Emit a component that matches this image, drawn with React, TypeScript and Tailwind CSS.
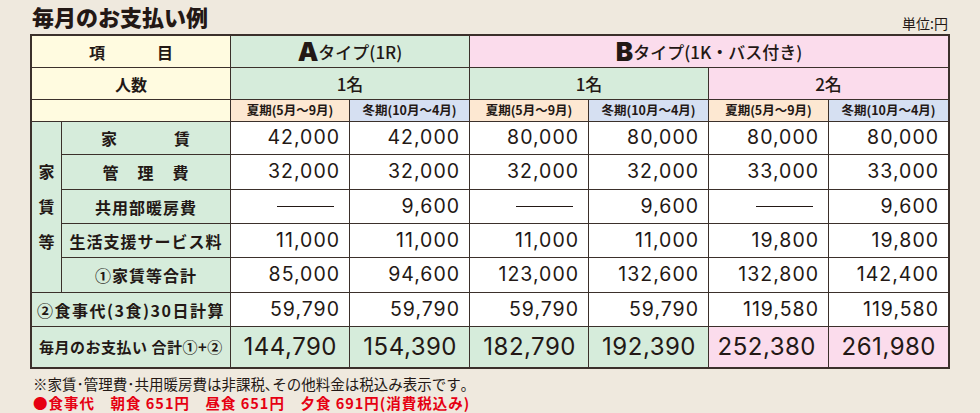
const jp = "font-[family-name:'Noto_Sans_CJK_JP',sans-serif]";
const num = "font-[family-name:Inter,'Noto_Sans_CJK_JP',sans-serif]";

const rows = [
  { label: ["家", "賃"], gap: "gap-[56px]", values: ["42,000", "42,000", "80,000", "80,000", "80,000", "80,000"] },
  { label: ["管", "理", "費"], gap: "gap-[18px]", values: ["32,000", "32,000", "32,000", "32,000", "33,000", "33,000"] },
  { label: ["共用部暖房費"], gap: "", values: ["-", "9,600", "-", "9,600", "-", "9,600"] },
  { label: ["生活支援サービス料"], gap: "", values: ["11,000", "11,000", "11,000", "11,000", "19,800", "19,800"] },
  { label: ["①家賃等合計"], gap: "", values: ["85,000", "94,600", "123,000", "132,600", "132,800", "142,400"] },
];

const meal = ["59,790", "59,790", "59,790", "59,790", "119,580", "119,580"];
const totals = ["144,790", "154,390", "182,790", "192,390", "252,380", "261,980"];

function Value({ v }: { v: string }) {
  return (
    <div className={`bg-white flex items-center justify-end pr-[9px] text-[19.5px] tracking-[1px] ${num}`}>
      {v === "-" ? <span className="block w-[57px] h-px bg-[#231815] mr-[6px]" /> : v}
    </div>
  );
}

function Season() {
  return (
    <>
      <div className="bg-[#fde8d2] flex items-center justify-center text-[12.5px] font-bold">夏期(5月〜9月)</div>
      <div className="bg-[#d6e0f2] flex items-center justify-center text-[12.5px] font-bold">冬期(10月〜4月)</div>
    </>
  );
}

export default function App() {
  return (
    <div className={`w-[980px] h-[413px] bg-[#efe9de] text-[#231815] pl-[30px] ${jp}`}>
      <div className="w-[920px] flex items-end justify-between pt-[4px] h-[34px]">
        <h1 className="text-[22px] font-black leading-none pl-[2px] pb-[7px]">毎月のお支払い例</h1>
        <span className="text-[14px] leading-none pb-[4px] pr-[2px]">単位:円</span>
      </div>

      <div className="w-[920px] border-2 border-[#3b302b] bg-[#3b302b] grid gap-px grid-cols-[29px_168px_118px_119px_118px_119px_119px_119px] grid-rows-[31px_31px_21px_32px_34px_33px_33px_34px_33px_40px]">
        {/* header */}
        <div className="col-span-2 bg-[#fffbe0] flex items-center justify-center gap-[52px] text-[16px] font-bold">
          <span>項</span>
          <span>目</span>
        </div>
        <div className="col-span-2 bg-[#d6ecdb] flex items-center justify-center text-[17px] font-medium">
          <span className={`text-[26px] font-black leading-none ${num}`}>A</span>
          <span>タイプ(1R)</span>
        </div>
        <div className="col-span-4 bg-[#fbdcec] flex items-center justify-center text-[17px] font-medium">
          <span className={`text-[26px] font-black leading-none ${num}`}>B</span>
          <span>タイプ(1K・バス付き)</span>
        </div>

        <div className="col-span-2 bg-[#fffbe0] flex items-center justify-center text-[16px] font-bold">人数</div>
        <div className="col-span-2 bg-[#d6ecdb] flex items-center justify-center text-[17px] font-medium">1名</div>
        <div className="col-span-2 bg-[#d6ecdb] flex items-center justify-center text-[17px] font-medium">1名</div>
        <div className="col-span-2 bg-[#fbdcec] flex items-center justify-center text-[17px] font-medium">2名</div>

        <div className="col-span-2 bg-[#fffbe0]" />
        <Season />
        <Season />
        <Season />

        {/* 家賃等 */}
        {rows.map((r, i) => (
          <>
            {i === 0 && (
              <div className="row-span-5 bg-[#d6ecdb] flex flex-col items-center justify-center text-[16px] font-bold leading-[35px] pb-[2px]">
                <span>家</span>
                <span>賃</span>
                <span>等</span>
              </div>
            )}
            <div className={`bg-[#d6ecdb] flex items-center justify-center text-[16px] font-bold tracking-[1px] ${r.gap}`}>
              {r.label.map((l) => (
                <span key={l}>{l}</span>
              ))}
            </div>
            {r.values.map((v, j) => (
              <Value key={j} v={v} />
            ))}
          </>
        ))}

        <div className="col-span-2 bg-[#d6ecdb] flex items-center justify-center text-[16px] font-bold tracking-[1.5px]">②食事代(3食)30日計算</div>
        {meal.map((v, j) => (
          <Value key={j} v={v} />
        ))}

        <div className="col-span-2 bg-[#d6ecdb] flex items-center justify-center text-[15px] font-bold tracking-[0.5px]">毎月のお支払い 合計①+②</div>
        {totals.map((v, j) => (
          <div
            key={j}
            className={`${j < 4 ? "bg-[#d6ecdb]" : "bg-[#fbdcec]"} flex items-center justify-end pr-[12px] text-[24px] tracking-[0.5px] ${num}`}
          >
            {v}
          </div>
        ))}
      </div>

      <div className="pl-[3px] pt-[5px] text-[14.5px] leading-[19px]">
        <p>※家賃･管理費･共用暖房費は非課税､その他料金は税込み表示です｡</p>
        <p className="text-[#e60012] font-bold tracking-[1px]">●食事代　朝食 651円　昼食 651円　夕食 691円(消費税込み)</p>
      </div>
    </div>
  );
}
